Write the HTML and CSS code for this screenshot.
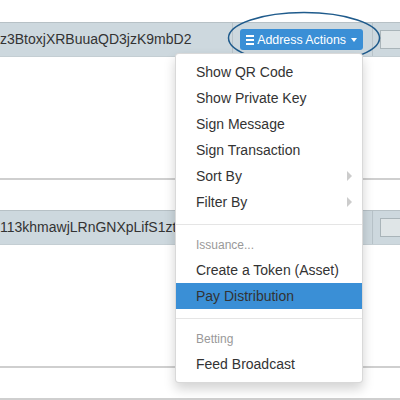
FILE: index.html
```html
<!DOCTYPE html>
<html>
<head>
<meta charset="utf-8">
<link rel="stylesheet" href="styles.css">
</head>
<body>
<div class="page">
  <div class="panel">
    <div class="panel-heading">
      <div class="title">z3BtoxjXRBuuaQD3jzK9mbD2</div>
      <div class="actions">
        <div class="dropdown">
          <button class="btn"><span class="bars"><i></i><i></i><i></i></span><span class="label">Address Actions</span><span class="caret"></span></button>
          <svg class="callout" width="156" height="56" viewBox="0 0 156 56"><ellipse cx="78" cy="28" rx="75.5" ry="25.5" fill="none" stroke="#1f5b8c" stroke-width="1.5"/></svg>
          <ul class="menu">
            <li class="item">Show QR Code</li>
            <li class="item">Show Private Key</li>
            <li class="item">Sign Message</li>
            <li class="item">Sign Transaction</li>
            <li class="item sub">Sort By</li>
            <li class="item sub">Filter By</li>
            <li class="divider"></li>
            <li class="header">Issuance...</li>
            <li class="item">Create a Token (Asset)</li>
            <li class="item active">Pay Distribution</li>
            <li class="divider"></li>
            <li class="header">Betting</li>
            <li class="item">Feed Broadcast</li>
          </ul>
        </div>
      </div>
      <div class="check"></div>
    </div>
    <div class="panel-body"></div>
  </div>
  <div class="panel">
    <div class="panel-heading">
      <div class="title">113khmawjLRnGNXpLifS1ztD</div>
      <div class="actions">
        <div class="dropdown">
          <button class="btn"><span class="bars"><i></i><i></i><i></i></span><span class="label">Address Actions</span><span class="caret"></span></button>
        </div>
      </div>
      <div class="check"></div>
    </div>
    <div class="panel-body"></div>
  </div>
  <div class="panel"></div>
</div>
</body>
</html>
```

FILE: styles.css
```css
html, body {
  margin: 0;
  padding: 0;
  background: #fff;
  overflow: hidden;
}
body {
  font-family: "Liberation Sans", Arial, sans-serif;
  font-size: 14px;
  color: #333;
}
.page {
  padding-top: 22px;
  display: flex;
  flex-direction: column;
  gap: 30px;
  width: 420px;
}
.panel {
  border-top: 1px solid #b7c1c6;
  border-bottom: 2px solid #cfcfcf;
}
.panel:last-child {
  border-bottom: none;
  height: 10px;
  border-top: 2px solid #cfcfcf;
}
.panel-heading {
  display: flex;
  height: 34px;
  background: #cdd8de;
  border-bottom: 1px solid #c4ced3;
  box-sizing: border-box;
}
.title {
  width: 232px;
  flex: none;
  border-right: 1px solid #b8c3c9;
  white-space: nowrap;
  overflow: hidden;
  line-height: 33px;
  font-size: 14px;
  color: #333;
}
.actions {
  display: flex;
  align-items: center;
  padding: 0 9px 0 7px;
  border-right: 1px solid #b8c3c9;
}
.dropdown {
  position: relative;
}
.btn {
  display: flex;
  align-items: center;
  height: 21px;
  width: 123px;
  box-sizing: border-box;
  padding: 0 6px;
  margin: 0;
  border: none;
  border-radius: 3px;
  background: #3a8fd6;
  color: #fff;
  font-family: "Liberation Sans", Arial, sans-serif;
  font-size: 12.4px;
}
.bars {
  display: flex;
  flex-direction: column;
  gap: 2px;
  width: 10px;
  margin-right: 3px;
}
.bars i {
  display: block;
  height: 2px;
  background: #fff;
}
.label {
  white-space: nowrap;
}
.caret {
  width: 0;
  height: 0;
  margin-left: 5px;
  border-left: 3px solid transparent;
  border-right: 3px solid transparent;
  border-top: 4px solid #fff;
}
.callout {
  position: absolute;
  left: -14px;
  top: -19px;
  pointer-events: none;
}
.check {
  margin: 7px 0 0 7px;
  width: 24px;
  height: 19px;
  box-sizing: border-box;
  border: 1px solid #a9b4b9;
  background: #dfe5e7;
}
.panel-body {
  height: 121px;
}
.menu {
  position: absolute;
  right: 0;
  top: 100%;
  margin: 3px 0 0 0;
  padding: 5px 0;
  width: 188px;
  box-sizing: border-box;
  list-style: none;
  background: #fff;
  border: 1px solid rgba(0, 0, 0, 0.15);
  border-radius: 4px;
  box-shadow: 0 6px 12px rgba(0, 0, 0, 0.175);
  z-index: 10;
}
.item {
  padding: 3px 20px;
  line-height: 20px;
  font-size: 14px;
  color: #333;
  white-space: nowrap;
  display: flex;
  align-items: center;
}
.item.active {
  background: #3a8fd6;
}
.item.sub::after {
  content: "";
  margin-left: auto;
  margin-right: -10px;
  width: 0;
  height: 0;
  border-top: 5px solid transparent;
  border-bottom: 5px solid transparent;
  border-left: 5px solid #cccccc;
}
.divider {
  height: 1px;
  margin: 9px 0;
  background: #e5e5e5;
}
.header {
  padding: 3px 20px;
  font-size: 12px;
  line-height: 17px;
  color: #999;
}
```
